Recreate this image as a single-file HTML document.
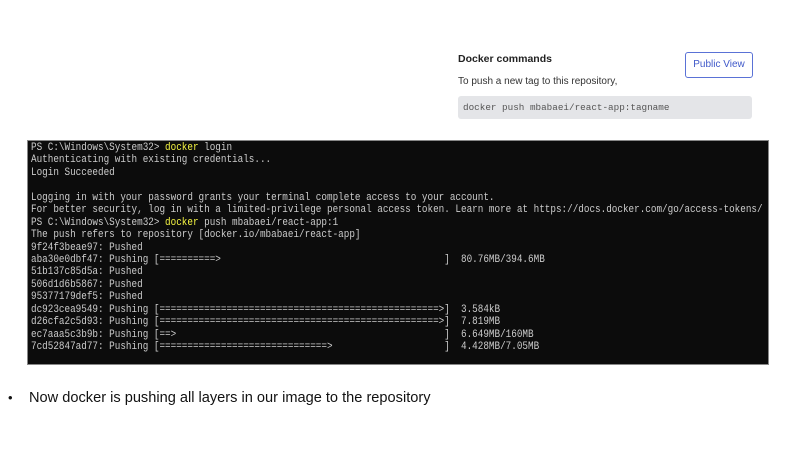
<!DOCTYPE html>
<html><head><style>
body{margin:0;width:800px;height:450px;background:#fff;position:relative;overflow:hidden;font-family:"Liberation Sans",sans-serif}
.t1{position:absolute;left:458px;top:53px;font-size:10.5px;font-weight:bold;color:#222}
.t2{position:absolute;left:458px;top:76px;font-size:10px;color:#333}
.btn{position:absolute;left:685px;top:52px;width:66px;height:24px;border:1.3px solid #5a72d6;border-radius:3px;color:#3f58c9;font-size:10px;text-align:center;line-height:24px}
.cmd{position:absolute;left:458px;top:96px;width:294px;height:23px;background:#e4e5e8;border-radius:3px;font-family:"Liberation Mono",monospace;font-size:9.3px;color:#555;line-height:23px;padding-left:5px;box-sizing:border-box}
.term{position:absolute;left:27px;top:140px;width:742px;height:225px;background:#0c0c0c;border:1px solid #888;box-sizing:border-box;overflow:hidden}
pre{margin:0;position:absolute;left:3px;top:1px;font-family:"Liberation Mono",monospace;font-size:11px;line-height:12.44px;color:#cccccc;transform:scaleX(0.846);transform-origin:0 0}
.y{color:#f5f543}
.b{position:absolute;left:8px;top:390px;font-size:13px;color:#111}
.bt{position:absolute;left:29px;top:390px;font-size:14.6px;color:#111}
</style></head><body>
<div class="t1">Docker commands</div>
<div class="btn">Public View</div>
<div class="t2">To push a new tag to this repository,</div>
<div class="cmd">docker push mbabaei/react-app:tagname</div>
<div class="term"><pre>PS C:\Windows\System32&gt; <span class="y">docker</span> login
Authenticating with existing credentials...
Login Succeeded

Logging in with your password grants your terminal complete access to your account.
For better security, log in with a limited-privilege personal access token. Learn more at https://docs.docker.com/go/access-tokens/
PS C:\Windows\System32&gt; <span class="y">docker</span> push mbabaei/react-app:1
The push refers to repository [docker.io/mbabaei/react-app]
9f24f3beae97: Pushed
aba30e0dbf47: Pushing [==========&gt;                                        ]  80.76MB/394.6MB
51b137c85d5a: Pushed
506d1d6b5867: Pushed
95377179def5: Pushed
dc923cea9549: Pushing [==================================================&gt;]  3.584kB
d26cfa2c5d93: Pushing [==================================================&gt;]  7.819MB
ec7aaa5c3b9b: Pushing [==&gt;                                                ]  6.649MB/160MB
7cd52847ad77: Pushing [==============================&gt;                    ]  4.428MB/7.05MB</pre></div>
<div class="b">•</div>
<div class="bt">Now docker is pushing all layers in our image to the repository</div>
</body></html>
